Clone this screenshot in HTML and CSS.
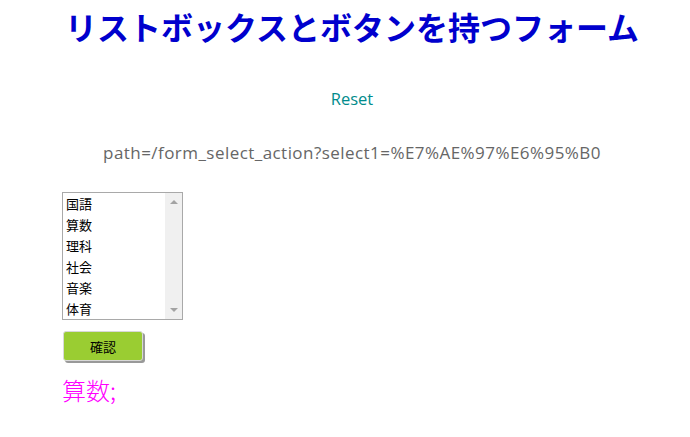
FILE: index.html
```html
<!DOCTYPE html>
<html lang="ja">
<head>
<meta charset="utf-8">
<title>リストボックスとボタンを持つフォーム</title>
<link rel="stylesheet" href="styles.css">
</head>
<body>
<h1 class="title">リストボックスとボタンを持つフォーム</h1>
<p class="reset"><a href="#">Reset</a></p>
<p class="path">path=/form_select_action?select1=%E7%AE%97%E6%95%B0</p>
<form class="form">
  <div class="listbox">
    <ul class="options">
      <li>国語</li>
      <li>算数</li>
      <li>理科</li>
      <li>社会</li>
      <li>音楽</li>
      <li>体育</li>
    </ul>
    <div class="scrollbar">
      <span class="arrow up"></span>
      <span class="arrow down"></span>
    </div>
  </div>
  <button type="button" class="confirm">確認</button>
</form>
<p class="result">算数;</p>
</body>
</html>
```
FILE: styles.css
```css
html, body {
  margin: 0;
  padding: 0;
  background: #fff;
}
body {
  padding: 6px 8px 8px;
  font-family: "Open Sans", "Noto Sans CJK JP", sans-serif;
}
.title {
  margin: 0;
  padding-left: 14px;
  text-align: center;
  font-family: "Noto Sans CJK JP", sans-serif;
  font-size: 32px;
  line-height: 40px;
  font-weight: 700;
  color: #0000cd;
}
.reset {
  margin: 41px 0 0;
  padding-left: 14px;
  text-align: center;
  font-size: 16.5px;
  line-height: 24px;
}
.reset a {
  color: #008b8b;
  text-decoration: none;
}
.path {
  margin: 30px 0 0;
  padding-left: 14px;
  text-align: center;
  font-size: 17px;
  letter-spacing: 0.45px;
  line-height: 24px;
  color: #666;
}
.form {
  margin: 27px 0 0 54px;
  display: flex;
  flex-direction: column;
  align-items: flex-start;
}
.listbox {
  display: flex;
  width: 121px;
  height: 128px;
  box-sizing: border-box;
  border: 1px solid #a9a9a9;
  background: #fff;
}
.options {
  list-style: none;
  margin: 0;
  padding: 0 0 0 3px;
  flex: 1;
  font-family: "Noto Sans CJK JP", sans-serif;
  font-size: 13px;
  line-height: 21px;
  color: #000;
}
.scrollbar {
  width: 17px;
  background: #f0f0f0;
  display: flex;
  flex-direction: column;
  justify-content: space-between;
  align-items: center;
  padding: 7px 0;
}
.arrow {
  width: 0;
  height: 0;
  border-left: 4px solid transparent;
  border-right: 4px solid transparent;
}
.arrow.up {
  border-bottom: 4px solid #a3a3a3;
}
.arrow.down {
  border-top: 4px solid #a3a3a3;
}
.confirm {
  margin: 11px 0 0 1px;
  width: 80px;
  height: 30px;
  box-sizing: border-box;
  background: #9acd32;
  border: 1px solid #d8d8d8;
  border-radius: 3px;
  box-shadow: 2px 2px 0 #999;
  font-family: "Noto Sans CJK JP", sans-serif;
  font-size: 13px;
  color: #000;
  padding: 0;
}
.result {
  margin: 13px 0 0 54px;
  font-family: "Noto Sans CJK JP", sans-serif;
  font-size: 24px;
  font-weight: 300;
  line-height: 32px;
  color: #ff00ff;
}
```
